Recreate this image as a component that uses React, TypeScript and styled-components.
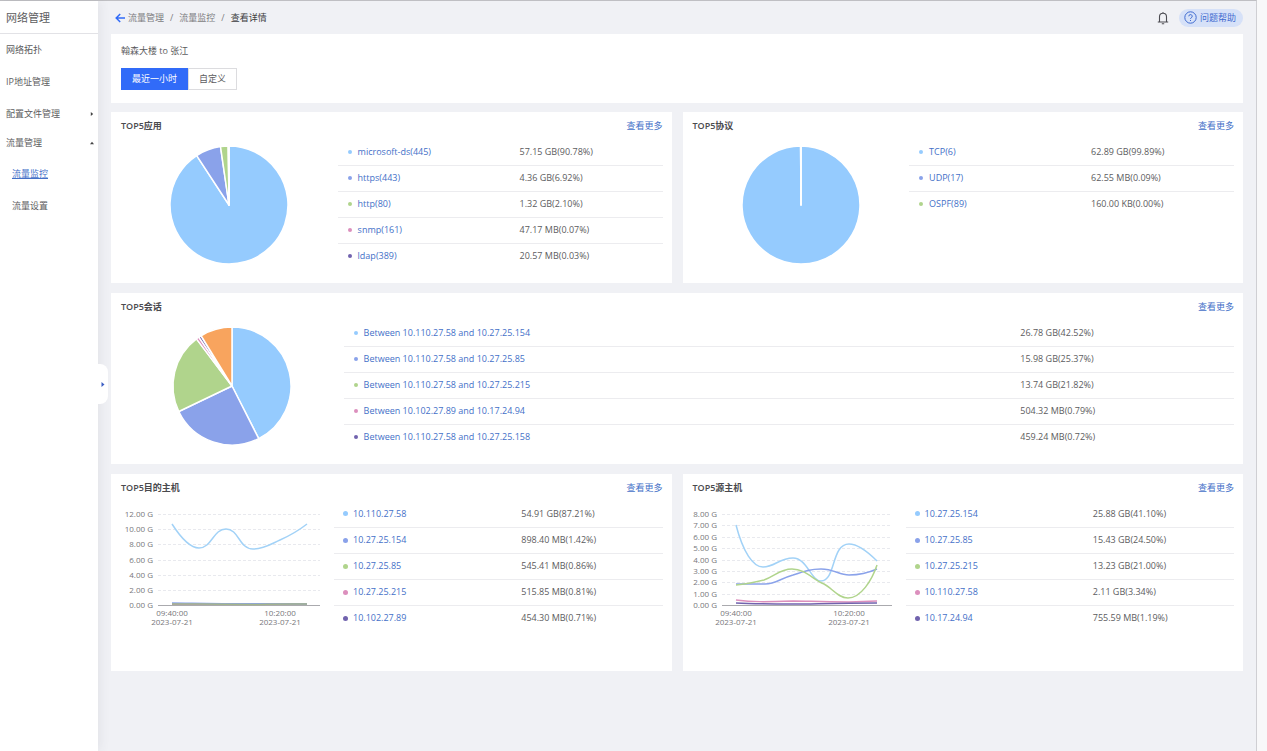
import React from "react";
import styled, { createGlobalStyle } from "styled-components";

const C = {
  sky: "#95cbfe",
  blue: "#8aa2ea",
  green: "#b0d48c",
  pink: "#dc8fbd",
  purple: "#7163ae",
  orange: "#f8a45e",
  link: "#4470c8",
  text: "#5c5c5e",
};
const SERIES = [C.sky, C.blue, C.green, C.pink, C.purple];

const GlobalStyle = createGlobalStyle`
  * { box-sizing: border-box; }
  body {
    margin: 0;
    background: #f8f8f9;
    color: ${C.text};
    font: 9px/14px "Open Sans", "Noto Sans CJK SC", sans-serif;
  }
  button { font: inherit; cursor: pointer; }
  a { color: inherit; text-decoration: none; }
  ul, ol { list-style: none; margin: 0; padding: 0; }
`;

const Page = styled.div`
  display: flex;
  min-height: 100vh;
  margin-right: 10px;
  background: #f0f1f5;
  border-top: 1px solid #bfbfc3;
  border-right: 1px solid #cfcfd3;
`;

const Sidebar = styled.aside`
  position: relative;
  flex: 0 0 98px;
  background: #fff;
  box-shadow: 2px 0 10px rgba(60, 60, 80, 0.08);
`;

const SideTitle = styled.h1`
  display: flex;
  align-items: center;
  height: 33px;
  margin: 0;
  padding: 2px 6px 0;
  border-bottom: 1px solid #e2e2e6;
  font-size: 11px;
  font-weight: 400;
`;

const NavLink = styled.a<{ $active?: boolean; $short?: boolean; $sub?: boolean }>`
  display: flex;
  align-items: center;
  justify-content: space-between;
  height: ${(p) => (p.$short ? 25 : 32)}px;
  padding: 0 4px 0 ${(p) => (p.$sub ? 12 : 6)}px;
  color: ${(p) => (p.$active ? C.link : "inherit")};
  text-decoration: ${(p) => (p.$active ? "underline" : "none")};
`;

const SubNav = styled.ul`
  padding-top: 3px;
`;

const Collapse = styled.button`
  position: absolute;
  top: 363px;
  left: 98px;
  display: flex;
  align-items: center;
  width: 10px;
  height: 40px;
  padding: 0 0 0 3px;
  border: 0;
  border-radius: 0 8px 8px 0;
  background: #fff;
`;

const Main = styled.main`
  flex: 1;
  min-width: 0;
  padding: 0 13px 20px;
`;

const TopBar = styled.header`
  display: flex;
  align-items: center;
  justify-content: space-between;
  height: 33px;
  padding-left: 4px;
`;

const Crumbs = styled.ol`
  display: flex;
  align-items: center;
  color: #7c7c80;

  li:first-of-type { display: flex; align-items: center; gap: 2px; }
  li + li::before { content: "/"; margin: 0 6px; }
  li:last-child a { color: #3c3c40; }
`;

const BackButton = styled.button`
  display: flex;
  padding: 0;
  border: 0;
  background: none;
`;

const Tools = styled.div`
  display: flex;
  align-items: center;
  gap: 10px;
`;

const IconButton = styled(BackButton)``;

const HelpButton = styled.button`
  display: flex;
  align-items: center;
  gap: 3px;
  height: 18px;
  padding: 0 7px 0 5px;
  border: 0;
  border-radius: 9px;
  background: #d6e1f8;
  color: #3f6bd0;
`;

const Card = styled.section`
  background: #fff;
  padding: 0 9px 14px 10px;
`;

const Filter = styled(Card)`
  padding: 10px 10px 13px;
  margin-bottom: 9px;
`;

const Route = styled.p`
  margin: 0 0 10px;
`;

const Segment = styled.div`
  display: flex;
`;

const SegmentButton = styled.button<{ $on?: boolean }>`
  height: 22px;
  padding: 0 10px;
  border: 1px solid ${(p) => (p.$on ? "#316bf8" : "#dcdcdf")};
  background: ${(p) => (p.$on ? "#316bf8" : "#fff")};
  color: ${(p) => (p.$on ? "#fff" : C.text)};
`;

const Dashboard = styled.div`
  display: grid;
  grid-template-columns: 1fr 1fr;
  gap: 10px 11px;
`;

const Panel = styled(Card)<{ $wide?: boolean; $tall?: boolean }>`
  grid-column: ${(p) => (p.$wide ? "1 / -1" : "auto")};
  padding-bottom: ${(p) => (p.$tall ? 40 : 14)}px;
`;

const PanelHead = styled.div`
  display: flex;
  align-items: center;
  justify-content: space-between;
  height: 27px;
`;

const PanelTitle = styled.h2`
  margin: 0;
  font-size: 9px;
  font-weight: 600;
  color: #4a4a4e;
`;

const More = styled.a`
  color: ${C.link};
`;

const PanelBody = styled.div`
  display: flex;
  align-items: flex-start;
`;

const ChartCell = styled.div<{ $basis: string }>`
  display: flex;
  justify-content: center;
  flex: 0 0 ${(p) => p.$basis};
  height: 130px;

  svg { display: block; overflow: visible; }
`;

const RankTable = styled.table<{ $nameWidth: string }>`
  flex: 1;
  table-layout: fixed;
  border-collapse: collapse;
  width: 100%;

  td { height: 26px; padding: 0; }
  td:first-child { width: ${(p) => p.$nameWidth}; }
  tr + tr td { border-top: 1px solid #ececef; }
`;

const Name = styled.a<{ $color: string; $dot: number }>`
  display: flex;
  align-items: center;
  gap: ${(p) => 10 - p.$dot}px;
  padding-left: ${(p) => 14 - p.$dot}px;
  color: ${C.link};

  &::before {
    content: "";
    width: ${(p) => p.$dot}px;
    height: ${(p) => p.$dot}px;
    border-radius: 50%;
    background: ${(p) => p.$color};
  }
`;

const AxisText = styled.text`
  font-size: 8px;
  line-height: 8px;
  fill: #77777b;
`;

type Row = [string, string];

function Ranks({ rows, nameWidth = "56%", dot = 4 }: { rows: Row[]; nameWidth?: string; dot?: number }) {
  return (
    <RankTable $nameWidth={nameWidth}>
      <tbody>
        {rows.map(([name, value], i) => (
          <tr key={name}>
            <td><Name href="#" $color={SERIES[i]} $dot={dot}>{name}</Name></td>
            <td>{value}</td>
          </tr>
        ))}
      </tbody>
    </RankTable>
  );
}

function Pie({ values, label }: { values: [number, string][]; label: string }) {
  const r = 59;
  const total = values.reduce((s, v) => s + v[0], 0);
  const at = (f: number) => {
    const a = f * 2 * Math.PI;
    return `${r * Math.sin(a)},${-r * Math.cos(a)}`;
  };
  let acc = 0;
  return (
    <svg width="120" height="130" viewBox="-60 -66 120 130" role="img" aria-label={label}>
      {values.map(([v, color], i) => {
        const from = acc / total;
        acc += v;
        const to = acc / total;
        return (
          <path
            key={i}
            d={`M0,0 L${at(from)} A${r},${r} 0 ${to - from > 0.5 ? 1 : 0} 1 ${at(to)} Z`}
            fill={color}
            stroke="#fff"
            strokeWidth="1.5"
            strokeLinejoin="round"
          />
        );
      })}
    </svg>
  );
}

interface LineProps {
  label: string;
  left: number;
  right: number;
  ticks: string[];
  times: number[];
  lines: { d: string; color: string }[];
}

function LineChart({ label, left, right, ticks, times, lines }: LineProps) {
  const top = 13;
  const bottom = 104;
  const step = (bottom - top) / (ticks.length - 1);
  return (
    <svg width="100%" height="130" role="img" aria-label={label}>
      {ticks.map((t, i) => {
        const y = top + step * i;
        const base = i === ticks.length - 1;
        return (
          <g key={t}>
            <AxisText x={left - 5} y={y + 3} textAnchor="end">{t}</AxisText>
            <line
              x1={left} x2={right} y1={Math.round(y) + 0.5} y2={Math.round(y) + 0.5}
              stroke={base ? "#aaaaae" : "#e8e9ee"}
              strokeDasharray={base ? undefined : "3 2"}
            />
          </g>
        );
      })}
      {lines.map((l, i) => (
        <path key={i} d={l.d} fill="none" stroke={l.color} strokeWidth="1.5" />
      ))}
      {times.map((x, i) => (
        <g key={x}>
          <AxisText x={x} y={115} textAnchor="middle">{i ? "10:20:00" : "09:40:00"}</AxisText>
          <AxisText x={x} y={124} textAnchor="middle">2023-07-21</AxisText>
        </g>
      ))}
    </svg>
  );
}

function Head({ title }: { title: string }) {
  return (
    <PanelHead>
      <PanelTitle>{title}</PanelTitle>
      <More href="#">查看更多</More>
    </PanelHead>
  );
}

const apps: Row[] = [
  ["microsoft-ds(445)", "57.15 GB(90.78%)"],
  ["https(443)", "4.36 GB(6.92%)"],
  ["http(80)", "1.32 GB(2.10%)"],
  ["snmp(161)", "47.17 MB(0.07%)"],
  ["ldap(389)", "20.57 MB(0.03%)"],
];
const protocols: Row[] = [
  ["TCP(6)", "62.89 GB(99.89%)"],
  ["UDP(17)", "62.55 MB(0.09%)"],
  ["OSPF(89)", "160.00 KB(0.00%)"],
];
const sessions: Row[] = [
  ["Between 10.110.27.58 and 10.27.25.154", "26.78 GB(42.52%)"],
  ["Between 10.110.27.58 and 10.27.25.85", "15.98 GB(25.37%)"],
  ["Between 10.110.27.58 and 10.27.25.215", "13.74 GB(21.82%)"],
  ["Between 10.102.27.89 and 10.17.24.94", "504.32 MB(0.79%)"],
  ["Between 10.110.27.58 and 10.27.25.158", "459.24 MB(0.72%)"],
];
const targets: Row[] = [
  ["10.110.27.58", "54.91 GB(87.21%)"],
  ["10.27.25.154", "898.40 MB(1.42%)"],
  ["10.27.25.85", "545.41 MB(0.86%)"],
  ["10.27.25.215", "515.85 MB(0.81%)"],
  ["10.102.27.89", "454.30 MB(0.71%)"],
];
const sources: Row[] = [
  ["10.27.25.154", "25.88 GB(41.10%)"],
  ["10.27.25.85", "15.43 GB(24.50%)"],
  ["10.27.25.215", "13.23 GB(21.00%)"],
  ["10.110.27.58", "2.11 GB(3.34%)"],
  ["10.17.24.94", "755.59 MB(1.19%)"],
];

export default function App() {
  return (
    <>
      <GlobalStyle />
      <Page>
        <Sidebar>
          <SideTitle>网络管理</SideTitle>
          <nav>
            <ul>
              <li><NavLink href="#">网络拓扑</NavLink></li>
              <li><NavLink href="#">IP地址管理</NavLink></li>
              <li>
                <NavLink href="#">
                  配置文件管理
                  <svg width="4" height="4" viewBox="0 0 4 4"><path d="M0.8,0 L3.2,2 L0.8,4 Z" fill="#444" /></svg>
                </NavLink>
              </li>
              <li>
                <NavLink href="#" $short>
                  流量管理
                  <svg width="4" height="4" viewBox="0 0 4 4"><path d="M0,3.2 L2,0.8 L4,3.2 Z" fill="#444" /></svg>
                </NavLink>
                <SubNav>
                  <li><NavLink href="#" $sub $active>流量监控</NavLink></li>
                  <li><NavLink href="#" $sub>流量设置</NavLink></li>
                </SubNav>
              </li>
            </ul>
          </nav>
          <Collapse aria-label="展开">
            <svg width="4" height="5" viewBox="0 0 4 5"><path d="M0.5,0 L3.5,2.5 L0.5,5 Z" fill="#3c5fc4" /></svg>
          </Collapse>
        </Sidebar>

        <Main>
          <TopBar>
            <Crumbs>
              <li>
                <BackButton aria-label="返回">
                  <svg width="11" height="10" viewBox="0 0 11 10" fill="none" stroke="#316bf8" strokeWidth="1.5">
                    <path d="M10,5 H1.5 M5.2,1 L1.2,5 L5.2,9" />
                  </svg>
                </BackButton>
                <a href="#">流量管理</a>
              </li>
              <li><a href="#">流量监控</a></li>
              <li><a href="#">查看详情</a></li>
            </Crumbs>
            <Tools>
              <IconButton aria-label="通知">
                <svg width="12" height="14" viewBox="0 0 12 14" fill="none" stroke="#4c4c52" strokeWidth="1.1">
                  <path d="M2.5,11 V5.8 a3.5,3.5 0 0 1 7,0 V11 M0.8,11 H11.2 M6,2.3 V0.9 M4.8,12.8 H7.2" />
                </svg>
              </IconButton>
              <HelpButton>
                <svg width="13" height="13" viewBox="0 0 13 13" fill="none" stroke="#3f6bd0" strokeWidth="1">
                  <circle cx="6.5" cy="6.5" r="5.7" />
                  <path d="M4.8,5.3 a1.7,1.7 0 1 1 2.5,1.5 q-0.8,0.4 -0.8,1.2 M6.5,9 V10" />
                </svg>
                问题帮助
              </HelpButton>
            </Tools>
          </TopBar>

          <Filter>
            <Route>翰森大楼 to 张江</Route>
            <Segment>
              <SegmentButton $on>最近一小时</SegmentButton>
              <SegmentButton>自定义</SegmentButton>
            </Segment>
          </Filter>

          <Dashboard>
            <Panel>
              <Head title="TOP5应用" />
              <PanelBody>
                <ChartCell $basis="40%">
                  <Pie label="TOP5应用" values={[[90.78, C.sky], [6.92, C.blue], [2.1, C.green], [0.07, C.pink], [0.03, C.purple], [0.1, C.orange]]} />
                </ChartCell>
                <Ranks rows={apps} />
              </PanelBody>
            </Panel>

            <Panel>
              <Head title="TOP5协议" />
              <PanelBody>
                <ChartCell $basis="40%">
                  <Pie label="TOP5协议" values={[[99.89, C.sky], [0.09, C.blue], [0.02, C.green]]} />
                </ChartCell>
                <Ranks rows={protocols} />
              </PanelBody>
            </Panel>

            <Panel $wide>
              <Head title="TOP5会话" />
              <PanelBody>
                <ChartCell $basis="20%">
                  <Pie label="TOP5会话" values={[[42.52, C.sky], [25.37, C.blue], [21.82, C.green], [0.79, C.pink], [0.72, C.purple], [8.78, C.orange]]} />
                </ChartCell>
                <Ranks rows={sessions} nameWidth="76%" />
              </PanelBody>
            </Panel>

            <Panel $tall>
              <Head title="TOP5目的主机" />
              <PanelBody>
                <ChartCell $basis="213px">
                  <LineChart
                    label="TOP5目的主机"
                    left={37}
                    right={199}
                    ticks={["12.00 G", "10.00 G", "8.00 G", "6.00 G", "4.00 G", "2.00 G", "0.00 G"]}
                    times={[51, 159]}
                    lines={[
                      { color: "#a2d2f7", d: "M51,23 C60,37 69,47 78,47 C91,47 92,28 105,28 C118,28 118,48 132,48 C143,48 150,43 159,39 S177,30 186,23" },
                      { color: C.purple, d: "M51,103 H186" },
                      { color: C.pink, d: "M51,103 H186" },
                      { color: C.blue, d: "M51,102 C70,102 90,103 186,103" },
                      { color: "#a3b58c", d: "M51,103 C80,103 120,103.5 132,103.5 S160,102.5 186,103" },
                    ]}
                  />
                </ChartCell>
                <Ranks rows={targets} nameWidth="57%" dot={5} />
              </PanelBody>
            </Panel>

            <Panel $tall>
              <Head title="TOP5源主机" />
              <PanelBody>
                <ChartCell $basis="213px">
                  <LineChart
                    label="TOP5源主机"
                    left={29}
                    right={199}
                    ticks={["8.00 G", "7.00 G", "6.00 G", "5.00 G", "4.00 G", "3.00 G", "2.00 G", "1.00 G", "0.00 G"]}
                    times={[43, 156]}
                    lines={[
                      { color: "#a2d2f7", d: "M43,24 C50,51 60,66 70,66 C82,66 86,57 100,57 C114,57 118,80 128,80 C143,80 138,43 156,43 C165,43 175,51 184,60" },
                      { color: C.blue, d: "M43,83 H72 C83,83 86,78 100,74 C112,70 118,68 128,68 C141,68 146,74 156,74 C165,74 175,72 184,68" },
                      { color: C.green, d: "M43,84 C55,83 63,81 71,79 C82,75 87,68 99,68 C113,68 120,79 131,83 C139,87 145,97 155,97 C168,97 179,79 184,64" },
                      { color: C.pink, d: "M43,99 C60,101 70,101 100,100 C115,100 125,101 156,101 L184,100" },
                      { color: C.purple, d: "M43,102 C60,103 80,103 100,103 S140,102 184,102" },
                    ]}
                  />
                </ChartCell>
                <Ranks rows={sources} nameWidth="57%" dot={5} />
              </PanelBody>
            </Panel>
          </Dashboard>
        </Main>
      </Page>
    </>
  );
}
